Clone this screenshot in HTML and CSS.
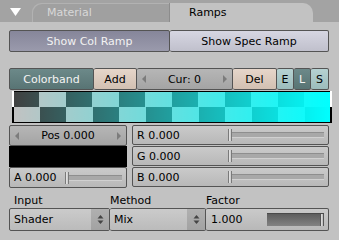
FILE: index.html
```html
<!DOCTYPE html>
<html>
<head>
<meta charset="utf-8">
<link rel="stylesheet" href="styles.css">
</head>
<body>
<div class="header">
  <svg class="tri" width="11" height="8" viewBox="0 0 11 8"><polygon points="0,0 11,0 5.5,8" fill="#ffffff"/></svg>
  <div class="tab tab-off">Material</div>
  <div class="tab tab-on">Ramps</div>
</div>
<div class="panel">
  <div class="row r1">
    <div class="btn b-pressed w-col">Show Col Ramp</div>
    <div class="btn b-lav w-spec">Show Spec Ramp</div>
  </div>
  <div class="row r2">
    <div class="btn b-teal w-band">Colorband</div>
    <div class="btn b-beige w-add">Add</div>
    <div class="btn b-num w-cur"><span class="arr arr-l"></span><span class="num-txt">Cur: 0</span><span class="arr arr-r"></span></div>
    <div class="btn b-beige w-del">Del</div>
    <div class="btn b-lteal w-e">E</div>
    <div class="btn b-teal w-l">L</div>
    <div class="btn b-lteal w-s">S</div>
  </div>
  <div class="ramp"><span class="mk mk-l"></span><span class="mk mk-r"></span></div>
  <div class="grid">
    <div class="col col-left">
      <div class="btn b-num fld"><span class="arr arr-l"></span><span class="num-txt">Pos 0.000</span><span class="arr arr-r"></span></div>
      <div class="swatch"></div>
      <div class="btn b-slide fld slider-a"><span class="s-lbl">A 0.000</span><span class="track"><span class="handle"></span></span></div>
    </div>
    <div class="col col-right">
      <div class="btn b-slide fld slider-c"><span class="s-lbl">R 0.000</span><span class="track"><span class="handle"></span></span></div>
      <div class="btn b-slide fld slider-c"><span class="s-lbl">G 0.000</span><span class="track"><span class="handle"></span></span></div>
      <div class="btn b-slide fld slider-c"><span class="s-lbl">B 0.000</span><span class="track"><span class="handle"></span></span></div>
    </div>
  </div>
  <div class="labels">
    <div class="lab w-shader lab-in">Input</div>
    <div class="lab w-mix">Method</div>
    <div class="lab w-fac">Factor</div>
  </div>
  <div class="row r4">
    <div class="btn b-menu w-shader"><span class="m-txt">Shader</span><span class="m-arr"><svg width="7" height="11" viewBox="0 0 7 11"><polygon points="3.5,1 6.5,4.5 0.5,4.5" fill="#444"/><polygon points="0.5,6.5 6.5,6.5 3.5,10" fill="#444"/></svg></span></div>
    <div class="btn b-menu w-mix"><span class="m-txt">Mix</span><span class="m-arr"><svg width="7" height="11" viewBox="0 0 7 11"><polygon points="3.5,1 6.5,4.5 0.5,4.5" fill="#444"/><polygon points="0.5,6.5 6.5,6.5 3.5,10" fill="#444"/></svg></span></div>
    <div class="btn b-slide w-fac fac"><span class="f-lbl">1.000</span><span class="fbar"><span class="fhandle"></span></span></div>
  </div>
</div>
</body>
</html>
```

FILE: styles.css
```css
* { box-sizing: border-box; margin: 0; padding: 0; }
html, body { width: 339px; height: 239px; overflow: hidden; }
body {
  font-family: "DejaVu Sans", "Liberation Sans", sans-serif;
  font-size: 11px;
  background: #c2c2c2;
  color: #000;
}

.header {
  height: 22px;
  background: #a3a3a3;
  display: flex;
  align-items: flex-end;
}
.tri { flex: none; align-self: flex-start; margin: 8px 0 0 10px; }
.tab { flex: none; height: 19px; line-height: 19px; }
.tab-off {
  margin-left: 11px;
  width: 138px;
  background: #a0a0a0;
  border-radius: 9px 0 0 0;
  border-right: 1px solid #8c8c8c;
  box-shadow: inset 1px 1px 0 #b2b2b2;
  color: #d8d8d8;
  padding-left: 15px;
}
.tab-on {
  width: 143px;
  background: #c2c2c2;
  border-radius: 0 10px 0 0;
  padding-left: 19px;
}

.panel { padding: 8px 10px 0 9px; }
.row { display: flex; }

.btn {
  flex: none;
  border: 1px solid #545454;
  border-radius: 2px;
  display: flex;
  align-items: center;
  justify-content: center;
  white-space: nowrap;
}
.b-pressed { background: linear-gradient(#86869a, #9a9aac); color: #f2f2f2; }
.b-lav { background: linear-gradient(#d6d6e2, #c0c0cc); }
.b-teal { background: linear-gradient(#6c8989, #587474); color: #f4f4f4; }
.b-lteal { background: linear-gradient(#b6d2d2, #9cbcbc); }
.b-beige { background: linear-gradient(#e6d6ca, #d2c0b2); }
.b-num { background: linear-gradient(#b6b6b6, #a4a4a4); justify-content: space-between; padding: 0 5px; }
.b-slide { background: linear-gradient(#cacaca, #b8b8b8); justify-content: flex-start; }
.b-menu { background: linear-gradient(#cbcbcb, #bbbbbb); justify-content: space-between; }

.r1 { height: 22px; }
.w-col { width: 161px; }
.w-spec { width: 159px; border-left: none; }

.r2 { height: 22px; margin-top: 16px; }
.w-band { width: 85px; }
.w-add { width: 43px; border-left: none; }
.w-cur { width: 96px; border-left: none; }
.w-del { width: 44px; border-left: none; }
.w-e { width: 17px; border-left: none; }
.w-l { width: 17px; border-left: none; }
.w-s { width: 18px; border-left: none; }

.arr { width: 0; height: 0; border-top: 4px solid transparent; border-bottom: 4px solid transparent; }
.arr-l { border-right: 4px solid #7c7c7c; }
.arr-r { border-left: 4px solid #7c7c7c; }

.ramp {
  position: relative;
  margin: 1px 0 0 3px;
  width: 320px;
  height: 32px;
  border: 1px solid #000;
  background:
    linear-gradient(to right, rgba(0,255,255,0), rgba(0,255,255,1)),
    conic-gradient(#c2c2c2 0 25%, #404040 0 50%, #c2c2c2 0 75%, #404040 0);
  background-size: 100% 100%, 53px 30px;
  background-position: 0 0, 0 0;
}
.mk { position: absolute; top: -1px; width: 2px; height: 32px;
  background: linear-gradient(#fff 0 50%, #000 50% 100%); }
.mk-l { left: -1px; }
.mk-r { right: -1px; }

.grid { display: flex; gap: 5px; margin-top: 2px; }
.col { display: flex; flex-direction: column; }
.col-left { width: 118px; }
.col-right { width: 197px; gap: 1px; }
.fld { height: 21px; }
.col-right .fld { height: 20px; }
.swatch { height: 21px; background: #000; }

.s-lbl { padding-left: 4px; flex: none; }
.slider-c .s-lbl { width: 95px; }
.slider-a .s-lbl { width: 55px; }
.track {
  height: 6px;
  background: #a8a8a8;
  border-top: 1px solid #8e8e8e;
  border-bottom: 1px solid #d0d0d0;
  display: flex;
  align-items: center;
}
.slider-c .track { width: 96px; }
.slider-a .track { width: 57px; }
.handle {
  width: 4px;
  height: 12px;
  flex: none;
  background: linear-gradient(to right, #e8e8e8, #c8c8c8);
  border-left: 1px solid #7a7a7a;
  border-right: 1px solid #7a7a7a;
}

.labels { display: flex; margin-top: 5px; height: 15px; line-height: 15px; }
.lab { flex: none; }
.lab-in { padding-left: 5px; }

.r4 { height: 23px; }
.w-shader { width: 101px; }
.w-mix { width: 96px; }
.w-fac { width: 123px; }
.r4 .w-mix, .r4 .w-fac { border-left: none; }
.m-txt { padding-left: 4px; }
.m-arr {
  width: 18px;
  align-self: stretch;
  background: linear-gradient(#b0b0b0, #a2a2a2);
  display: flex;
  align-items: center;
  justify-content: center;
}
.f-lbl { padding-left: 5px; width: 61px; flex: none; }
.fbar {
  width: 57px;
  height: 13px;
  background: linear-gradient(#5e5e5e, #828282);
  border-top: 1px solid #4a4a4a;
  display: flex;
  justify-content: flex-end;
}
.fhandle {
  width: 4px;
  height: 100%;
  background: linear-gradient(to right, #e4e4e4, #b8b8b8);
  border-left: 1px solid #555;
  border-right: 1px solid #555;
}
```
